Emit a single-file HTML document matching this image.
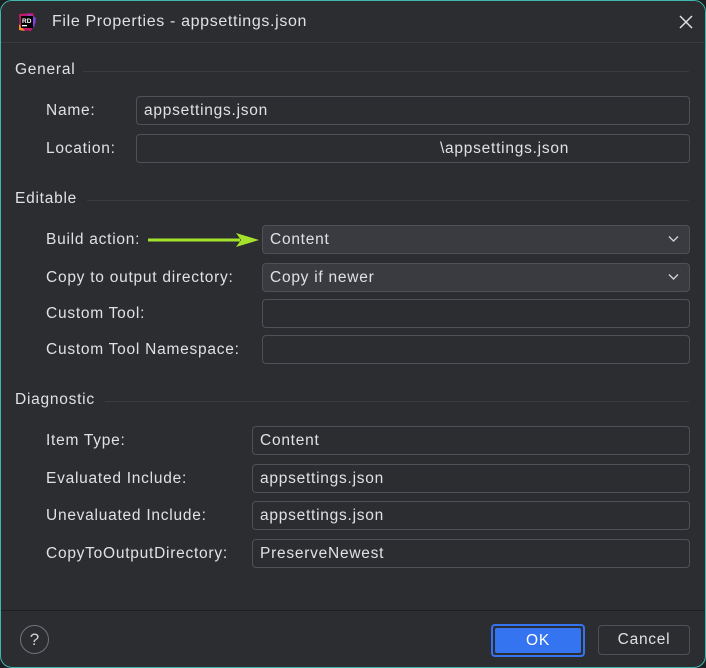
<!DOCTYPE html>
<html><head><meta charset="utf-8"><style>
*{box-sizing:border-box;margin:0;padding:0}
body{width:706px;height:668px;background:#1e1f22;font-family:"Liberation Sans",sans-serif;color:#dfe1e5;font-size:15.5px;letter-spacing:0.75px;overflow:hidden}
.win{position:absolute;left:0;top:0;width:706px;height:668px;background:#2b2d30;border:1px solid #3fb8b0;border-radius:12px;overflow:hidden}
.tb{position:absolute;left:0;top:0;right:0;height:42px;background:#2b2d30;border-bottom:1px solid #393b40}
.a{position:absolute;white-space:nowrap}
.sec{position:absolute;left:14px;color:#dfe1e5}
.line{position:absolute;height:1px;background:#393b40;right:16px}
.f{position:absolute;border:1px solid #4e5157;border-radius:4px;background:#2b2d30;padding-left:7px;line-height:27px;height:29px}
.c{background:#393b40;border-color:#4e5157}
.chev{position:absolute;right:10px;top:9px}
.btn{position:absolute;height:30px;border-radius:4px;text-align:center;line-height:28px}
</style></head><body>
<div class="win">
<div class="tb">
<svg class="a" style="left:16px;top:11px" width="20" height="20" viewBox="0 0 20 20"><path d="M2 2 L16 1 L19 10 L14 19 L3 18 Z" fill="#c21a6a"/><path d="M10 1 L19 6 L17 16 Z" fill="#6b4cff" opacity=".8"/><path d="M2 12 L8 19 L2 18Z" fill="#f58a2a"/><rect x="4" y="4" width="12" height="12" fill="#000"/><text x="5" y="11" font-size="6.5" fill="#fff" font-family="Liberation Sans" font-weight="bold" letter-spacing="0">RD</text><rect x="5" y="13" width="5" height="1.3" fill="#fff"/></svg>
<div class="a" style="left:51px;top:12px;font-size:16px;letter-spacing:0.65px">File Properties - appsettings.json</div>
<svg class="a" style="left:678px;top:14px" width="14" height="14" viewBox="0 0 14 14"><path d="M1 1L13 13M13 1L1 13" stroke="#dfe1e5" stroke-width="1.5"/></svg>
</div>

<div class="sec" style="top:60px">General</div><div class="line" style="left:82px;top:70px"></div>
<div class="a" style="left:45px;top:101px">Name:</div>
<div class="f" style="left:135px;top:95px;width:554px">appsettings.json</div>
<div class="a" style="left:45px;top:139px">Location:</div>
<div class="f" style="left:135px;top:133px;width:554px;padding-left:303px">\appsettings.json</div>

<div class="sec" style="top:189px">Editable</div><div class="line" style="left:86px;top:199px"></div>
<div class="a" style="left:45px;top:230px">Build action:</div>
<svg class="a" style="left:147px;top:230px" width="112" height="18" viewBox="0 0 112 18"><path d="M0 9H92" stroke="#a4e22c" stroke-width="3"/><path d="M88 2L111 9L88 16L93 9Z" fill="#a4e22c"/></svg>
<div class="f c" style="left:261px;top:224px;width:428px">Content<svg class="chev" width="11" height="8" viewBox="0 0 11 8"><path d="M1 1.5L5.5 6L10 1.5" stroke="#cfd1d5" stroke-width="1.4" fill="none"/></svg></div>
<div class="a" style="left:45px;top:268px">Copy to output directory:</div>
<div class="f c" style="left:261px;top:262px;width:428px">Copy if newer<svg class="chev" width="11" height="8" viewBox="0 0 11 8"><path d="M1 1.5L5.5 6L10 1.5" stroke="#cfd1d5" stroke-width="1.4" fill="none"/></svg></div>
<div class="a" style="left:45px;top:304px">Custom Tool:</div>
<div class="f" style="left:261px;top:298px;width:428px"></div>
<div class="a" style="left:45px;top:340px">Custom Tool Namespace:</div>
<div class="f" style="left:261px;top:334px;width:428px"></div>

<div class="sec" style="top:390px">Diagnostic</div><div class="line" style="left:104px;top:400px"></div>
<div class="a" style="left:45px;top:431px">Item Type:</div>
<div class="f" style="left:251px;top:425px;width:438px">Content</div>
<div class="a" style="left:45px;top:469px">Evaluated Include:</div>
<div class="f" style="left:251px;top:463px;width:438px">appsettings.json</div>
<div class="a" style="left:45px;top:506px">Unevaluated Include:</div>
<div class="f" style="left:251px;top:500px;width:438px">appsettings.json</div>
<div class="a" style="left:45px;top:544px">CopyToOutputDirectory:</div>
<div class="f" style="left:251px;top:538px;width:438px">PreserveNewest</div>

<div class="a" style="left:0;right:0;top:609px;height:1px;background:#1e1f22"></div>
<div class="a" style="left:19px;top:624px;width:29px;height:29px;border:1px solid #6f737a;border-radius:50%;text-align:center;line-height:27px;font-size:17px;color:#cfd1d5;letter-spacing:0">?</div>
<div class="btn" style="left:490px;top:623px;width:94px;height:33px;border:2px solid #3574f0;padding:1px"><div style="background:#3574f0;border-radius:3px;height:27px;line-height:27px;color:#fff;box-shadow:inset 0 0 0 1px #2b2d30">OK</div></div>
<div class="btn" style="left:597px;top:624px;width:92px;border:1px solid #4e5157;color:#dfe1e5">Cancel</div>
</div>
</body></html>
